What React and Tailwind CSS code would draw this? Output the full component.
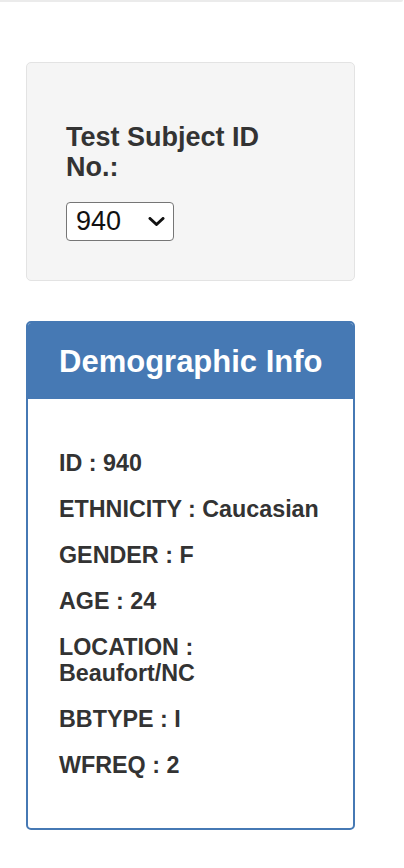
import React, { useState } from 'react';

const info = [
  ['ID', '940'],
  ['ETHNICITY', 'Caucasian'],
  ['GENDER', 'F'],
  ['AGE', '24'],
  ['LOCATION', 'Beaufort/NC'],
  ['BBTYPE', 'I'],
  ['WFREQ', '2'],
];

const App = () => {
  const [subject, setSubject] = useState('940');

  return (
    <div className="min-h-[868px] w-[404px] bg-white text-[#333] font-['Liberation_Sans',Arial,sans-serif]">
      <div className="h-[2px] w-[403px] bg-[#ebebeb] rounded-br-sm" />

      <div className="pl-[26px] pt-[60px]">
        <div className="w-[329px] rounded-[5px] border border-[#e3e3e3] bg-[#f5f5f5] pl-[39px] pt-[60px] pb-[39px]">
          <label htmlFor="subject" className="block text-[27px] font-bold leading-[1.1] w-[210px]">
            Test Subject ID No.:
          </label>
          <div className="relative mt-[20px] w-[108px]">
            <select
              id="subject"
              value={subject}
              onChange={(e) => setSubject(e.target.value)}
              className="block h-[39px] w-[108px] appearance-none rounded-[4px] border border-[#767676] bg-white pl-[9px] text-[27px] leading-none text-[#111] outline-none"
            >
              <option value="940">940</option>
              <option value="941">941</option>
              <option value="943">943</option>
            </select>
            <svg
              className="pointer-events-none absolute right-[9px] top-[15px] h-[9px] w-[17px]"
              viewBox="0 0 17 9"
              fill="none"
              stroke="#111"
              strokeWidth="3"
              strokeLinecap="round"
              strokeLinejoin="round"
            >
              <path d="M2 1.5l6.5 6 6.5-6" />
            </svg>
          </div>
        </div>

        <div className="mt-[40px] w-[329px] overflow-hidden rounded-[5px] border-2 border-[#4679b4] bg-white">
          <div className="bg-[#4679b4] pl-[31px] pt-[22px] pb-[20px]">
            <h3 className="text-[31px] font-bold leading-[1.1] text-white">Demographic Info</h3>
          </div>
          <div className="flex flex-col gap-[20px] pl-[31px] pt-[51px] pb-[50px]">
            {info.map(([key, value]) => (
              <h5 key={key} className="w-[260px] text-[23.3px] font-bold leading-[26px] text-[#333]">
                {key} : {value}
              </h5>
            ))}
          </div>
        </div>
      </div>
    </div>
  );
};

export default App;
